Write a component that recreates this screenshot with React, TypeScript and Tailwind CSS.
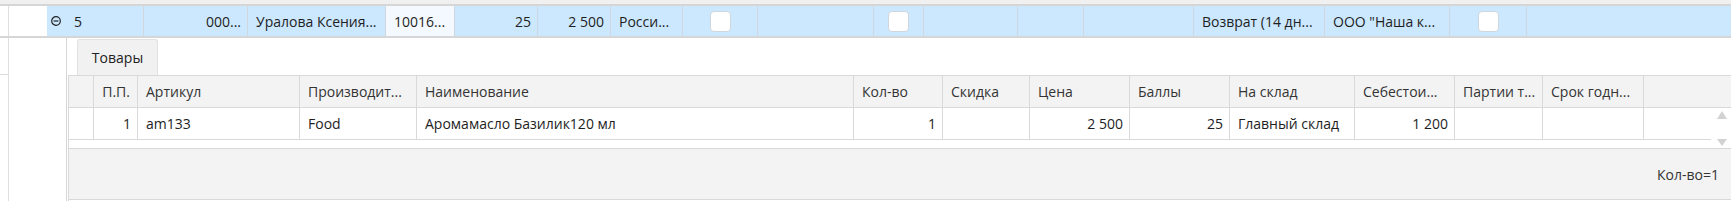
import React from 'react';

type Cell = { w: string; text?: string; align?: 'l' | 'r'; check?: boolean; bg?: string };

// parent row cells, widths include the 1px right border
const mainCells: Cell[] = [
  { w: 'w-[104px]', text: '000...', align: 'r' },
  { w: 'w-[138px]', text: 'Уралова Ксения...' },
  { w: 'w-[69px]', text: '10016...', bg: 'bg-[#f3f9ff]' },
  { w: 'w-[83px]', text: '25', align: 'r' },
  { w: 'w-[73px]', text: '2 500', align: 'r' },
  { w: 'w-[72px]', text: 'Росси...' },
  { w: 'w-[75px]', check: true },
  { w: 'w-[116px]' },
  { w: 'w-[50px]', check: true },
  { w: 'w-[94px]' },
  { w: 'w-[66px]' },
  { w: 'w-[110px]' },
  { w: 'w-[131px]', text: 'Возврат (14 дн...' },
  { w: 'w-[125px]', text: 'ООО "Наша к...' },
  { w: 'w-[77px]', check: true },
];

type Col = { w: string; title: string; value?: string; hAlign?: 'l' | 'r'; vAlign?: 'l' | 'r' };

const columns: Col[] = [
  { w: 'w-[44px]', title: 'П.П.', value: '1', hAlign: 'r', vAlign: 'r' },
  { w: 'w-[162px]', title: 'Артикул', value: 'am133' },
  { w: 'w-[117px]', title: 'Производит...', value: 'Food' },
  { w: 'w-[437px]', title: 'Наименование', value: 'Аромамасло Базилик120 мл' },
  { w: 'w-[89px]', title: 'Кол-во', value: '1', vAlign: 'r' },
  { w: 'w-[87px]', title: 'Скидка' },
  { w: 'w-[100px]', title: 'Цена', value: '2 500', vAlign: 'r' },
  { w: 'w-[100px]', title: 'Баллы', value: '25', vAlign: 'r' },
  { w: 'w-[125px]', title: 'На склад', value: 'Главный склад' },
  { w: 'w-[100px]', title: 'Себестои...', value: '1 200', vAlign: 'r' },
  { w: 'w-[88px]', title: 'Партии т...' },
  { w: 'w-[101px]', title: 'Срок годн...' },
];

const Checkbox = () => (
  <div className="w-[21px] h-[21px] rounded-[4px] border border-[#cfd6dd] bg-white" />
);

const CollapseIcon = () => (
  <svg width="10" height="10" viewBox="0 0 10 10" className="shrink-0">
    <circle cx="5" cy="5" r="4.3" fill="none" stroke="#222" strokeWidth="1.2" />
    <line x1="2.6" y1="5" x2="7.4" y2="5" stroke="#222" strokeWidth="1.2" />
  </svg>
);

export default function App() {
  return (
    <div
      className="w-[1731px] h-[201px] bg-white overflow-hidden text-[14px] text-[#1e1e1e]"
      style={{ fontFamily: '"Open Sans", "Noto Sans", sans-serif' }}
    >
      {/* previous row remainder */}
      <div className="h-[6px] bg-[#f0f0f0] border-b-2 border-[#d6d6d6]" />

      {/* selected master row */}
      <div className="flex h-[32px] border-b-2 border-[#d6d6d6]">
        <div className="w-[9px] border-r border-[#dedede]" />
        <div className="w-[38px]" />
        <div className="flex flex-1 bg-[#cce8ff]">
          <div className="w-[97px] flex items-center border-r border-[#d0d7de] pl-[4px] gap-[13px]">
            <CollapseIcon />
            <span>5</span>
          </div>
          {mainCells.map((c, i) => (
            <div
              key={i}
              className={`${c.w} ${c.bg ?? ''} shrink-0 flex items-center border-r border-[#d0d7de] whitespace-nowrap overflow-hidden ${
                c.check ? 'justify-center' : c.align === 'r' ? 'justify-end pr-[6px]' : 'pl-[8px]'
              }`}
            >
              {c.check ? <Checkbox /> : c.text}
            </div>
          ))}
          <div className="flex-1" />
        </div>
      </div>

      {/* detail area */}
      <div className="flex h-[163px]">
        <div className="w-[9px] border-r border-[#dedede]">
          <div className="h-[37px] border-b border-[#dedede]" />
        </div>
        <div className="w-[57px]" />
        <div className="flex-1 flex flex-col border-l border-[#d6d6d6] pl-[1px]">
          {/* tabs */}
          <div className="h-[37px] flex items-end pl-[9px]">
            <div className="h-[36px] w-[81px] flex items-center justify-center bg-[#f1f1f1] border border-b-0 border-[#e2e2e2] rounded-t-[3px] text-[#222]">
              Товары
            </div>
          </div>

          {/* grid */}
          <div className="flex-1 flex flex-col border-t border-l border-[#d9d9d9]">
            <div className="flex h-[32px] bg-[#f3f3f3] border-b border-[#d9d9d9] text-[#333]">
              <div className="w-[25px] shrink-0 border-r border-[#d9d9d9]" />
              {columns.map((c, i) => (
                <div
                  key={i}
                  className={`${c.w} shrink-0 flex items-center border-r border-[#d9d9d9] whitespace-nowrap overflow-hidden ${
                    c.hAlign === 'r' ? 'justify-end pr-[7px]' : 'pl-[8px]'
                  }`}
                >
                  {c.title}
                </div>
              ))}
              <div className="flex-1" />
            </div>

            <div className="flex h-[32px] bg-white">
              <div className="w-[25px] shrink-0 border-r border-b border-[#d9d9d9]" />
              {columns.map((c, i) => (
                <div
                  key={i}
                  className={`${c.w} shrink-0 flex items-center border-r border-b border-[#d9d9d9] whitespace-nowrap overflow-hidden ${
                    c.vAlign === 'r' ? 'justify-end pr-[6px]' : 'pl-[8px]'
                  }`}
                >
                  {c.value}
                </div>
              ))}
              <div className="flex-1 flex">
                <div className="flex-1 border-b border-[#d9d9d9]" />
                <div className="w-[20px] relative">
                  <svg width="10" height="8" viewBox="0 0 10 8" className="absolute left-[6px] top-[3px]">
                    <polygon points="5,0 10,8 0,8" fill="#d2d2d2" />
                  </svg>
                </div>
              </div>
            </div>

            <div className="flex h-[9px] border-b border-[#d9d9d9]">
              <div className="flex-1" />
              <div className="w-[20px] relative">
                <svg width="10" height="7" viewBox="0 0 10 7" className="absolute left-[6px] top-[-1px]">
                  <polygon points="0,0 10,0 5,7" fill="#d2d2d2" />
                </svg>
              </div>
            </div>

            <div className="h-[51px] flex items-center justify-end pr-[12px] bg-[#f3f3f3] border-b border-[#d9d9d9] text-[#333]">
              Кол-во=1
            </div>
          </div>
        </div>
      </div>
    </div>
  );
}
